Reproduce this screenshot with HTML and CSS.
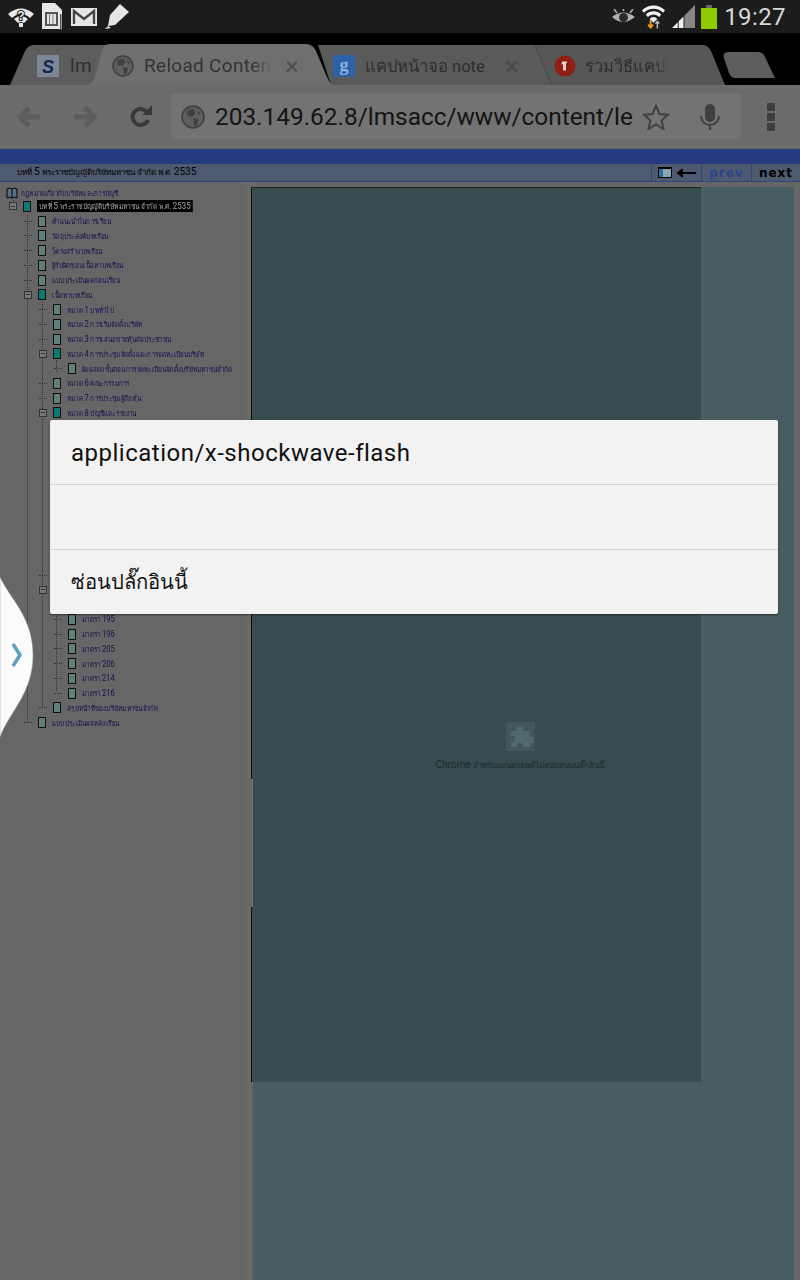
FILE: index.html
```html
<!DOCTYPE html>
<html lang="th">

<head>
    <meta charset="UTF-8">
    <meta name="viewport" content="width=device-width, initial-scale=1.0">
    <title>Reload Content</title>
    <link rel="stylesheet" href="styles.css">
</head>

<body>
    <!-- android status bar -->
    <div class="status_bar">
        <div class="status_left">
            <svg width="26" height="20" viewBox="0 0 26 20">
                <path d="M0 7 Q13 -4 26 7 L22 11 Q13 3 4 11 Z M6 12 Q13 6 20 12 L16 16 Q13 14 10 16 Z" fill="#e8e8e8" />
                <text x="13" y="13" class="wifi_q">?</text>
                <rect x="11" y="16" width="4" height="4" fill="#e8e8e8" />
            </svg>
            <svg width="21" height="27" viewBox="0 0 21 27">
                <path d="M0 0 H13 L20 7 V26 H0 Z" fill="#e6e6e6" />
                <rect x="4" y="10" width="11" height="12" fill="none" stroke="#555" stroke-width="2" />
                <path d="M7.500 10 V22 M11 10 V22" stroke="#777" />
                <rect x="18" y="11" width="1.500" height="16" fill="#555" />
            </svg>
            <svg width="26" height="18" viewBox="0 0 26 18">
                <rect width="26" height="18" fill="#e6e6e6" />
                <path d="M3 16 V3 L13 11 L23 3 V16" fill="none" stroke="#444" stroke-width="2.400" />
            </svg>
            <svg width="24" height="25" viewBox="0 0 24 25">
                <path d="M15 0 L24 8 L10 21 L3 22 L5 11 Z M3 22 L0 25 L6 24 Z" fill="#e6e6e6" />
            </svg>
        </div>
        <div class="status_right">
            <svg width="23" height="16" viewBox="0 0 23 16">
                <path d="M0 8 Q11 -1 23 8 Q11 18 0 8 Z" fill="#b0b0b0" />
                <circle cx="11.500" cy="8.500" r="4.500" fill="#2c2c2c" />
                <path d="M2 0 L5 4 M11.500 0 V2 M21 0 L18 4" stroke="#b0b0b0" stroke-width="1.500" />
            </svg>
            <svg class="wifi_icon" width="23" height="24" viewBox="0 0 24 24">
                <path d="M0 5 A17 17 0 0 1 24 5 L22 7.500 A14 14 0 0 0 2 7.500 Z M4 9.500 A11 11 0 0 1 20 9.500 L18 12 A8 8 0 0 0 6 12 Z M8 14 A5 5 0 0 1 16 14 L12 18 Z" fill="#f0f0f0" />
                <path d="M9 15 V22 M6.500 20 L9 23 L11.500 20" fill="none" stroke="#f09a20" stroke-width="2" />
                <path d="M16 24 V17 M14 19 L16 16.500 L18 19" fill="none" stroke="#bbb" stroke-width="1.500" />
            </svg>
            <svg width="23" height="23" viewBox="0 0 24 24">
                <path d="M24 0 V24 H13 V11 Z" fill="#888" />
                <path d="M0 24 L6 18 V24 Z M7 17 L12 12 V24 H7 Z" fill="#f0f0f0" />
            </svg>
            <div class="battery">
                <div class="battery_cap"></div>
                <div class="battery_body"></div>
            </div>
            <span class="clock">19:27</span>
        </div>
    </div>

    <!-- chrome tab strip -->
    <div class="tab_strip">
        <svg class="tab_shapes" width="800" height="52" viewBox="0 0 800 52">
            <path d="M10 52 L25 18 Q28 12 34 12 H110 V52 Z" fill="#5d5d5d" />
            <path d="M318 12 H420 V52 H337 Q331 52 329 46 Z" fill="#5a5a5a" />
            <path d="M420 12 H535 L552 52 H420 Z" fill="#5a5a5a" />
            <path d="M535 12 H703 Q708 12 711 18 L725 52 H552 Z" fill="#575757" />
            <path d="M535 12 L552 52" fill="none" stroke="#4c4c4c" />
            <path d="M88 52 Q93 50 95 44 L101 20 Q103 11 110 11 H306 Q313 11 316 18 L327 44 Q330 52 337 52 Z" fill="#6f6f6f" />
            <path d="M729 19 H758 Q763 19 765 24 L775 45 H735 Q731 45 729 40 L724 25 Q722 19 729 19 Z" fill="#5d5d5d" />
        </svg>
        <div class="tab tab_one">
            <svg class="favicon" width="22" height="22" viewBox="0 0 22 22">
                <rect width="22" height="22" fill="#7c8696" />
                <text x="11" y="18" class="favicon_s">S</text>
            </svg>
            <span class="tab_title">lm</span>
        </div>
        <div class="tab tab_two">
            <svg class="favicon" width="22" height="22" viewBox="0 0 22 22">
                <use href="#globe" />
            </svg>
            <span class="tab_title tab_title_active">Reload Content</span>
            <span class="tab_close">×</span>
        </div>
        <div class="tab tab_three">
            <svg class="favicon" width="22" height="22" viewBox="0 0 22 22">
                <rect width="22" height="22" rx="1" fill="#2c61a8" />
                <text x="11" y="16" class="favicon_g">g</text>
            </svg>
            <span class="tab_title tab_title_thai">แคปหน้าจอ note</span>
            <span class="tab_close tab_close_dim">×</span>
        </div>
        <div class="tab tab_four">
            <svg class="favicon" width="22" height="22" viewBox="0 0 24 24">
                <circle cx="12" cy="12" r="11.500" fill="#8e1f14" />
                <path d="M9 7 H14 V9 H13 V17 H10 V10 H8 Z" fill="#e8d8d0" />
            </svg>
            <span class="tab_title tab_title_thai tab_title_fade">รวมวิธีแคปเะ</span>
        </div>
    </div>

    <!-- chrome toolbar -->
    <div class="toolbar">
        <svg width="26" height="24" viewBox="0 0 26 24" class="nav_back">
            <path d="M24 12 H5 M13 3 L4 12 L13 21" fill="none" stroke="#5d5d5d" stroke-width="5" />
        </svg>
        <svg width="26" height="24" viewBox="0 0 26 24" class="nav_forward">
            <path d="M2 12 H21 M13 3 L22 12 L13 21" fill="none" stroke="#5d5d5d" stroke-width="5" />
        </svg>
        <svg width="24" height="24" viewBox="0 0 24 24" class="nav_reload">
            <path d="M19 15 A8 8 0 1 1 17 6" fill="none" stroke="#3a3a3a" stroke-width="4" />
            <path d="M13 10 H23 V0 Z" fill="#3a3a3a" />
        </svg>
        <div class="url_box">
            <svg width="24" height="24" viewBox="0 0 22 22">
                <use href="#globe" />
            </svg>
            <span class="url_text">203.149.62.8/lmsacc/www/content/le</span>
            <svg class="url_star" width="28" height="26" viewBox="0 0 28 26">
                <path d="M14 2 L17.500 10 L26 10.800 L19.600 16.500 L21.500 25 L14 20.500 L6.500 25 L8.400 16.500 L2 10.800 L10.500 10 Z" fill="none" stroke="#3f3f3f" stroke-width="2" />
            </svg>
            <svg class="url_mic" width="20" height="26" viewBox="0 0 20 26">
                <rect x="5" y="0" width="10" height="18" rx="5" fill="#3f3f3f" />
                <path d="M1 12 A9 9 0 0 0 19 12 M10 21 V26" fill="none" stroke="#3f3f3f" stroke-width="2" />
            </svg>
        </div>
        <div class="menu_dots"><i></i><i></i><i></i></div>
    </div>

    <!-- the lms page -->
    <div class="page_top"></div>
    <div class="page_head">
        <span class="page_title">บทที่ <b>5</b> พระราชบัญญัติบริษัทมหาชน จำกัด พ.ศ. <b>2535</b></span>
        <div class="head_tools">
            <div class="head_cell head_icons">
                <span class="pane_icon"></span>
                <svg width="19" height="10" viewBox="0 0 20 10">
                    <path d="M20 5 H5 M6 1 L1 5 L6 9" fill="#000" stroke="#000" stroke-width="2" />
                </svg>
            </div>
            <div class="head_cell head_prev">prev</div>
            <div class="head_cell head_next">next</div>
        </div>
    </div>

    <div class="page_body">
        <div class="tree" id="tree">
            <!-- dotted connectors of the tree -->
            <span class="guide guide_top"></span>
            <span class="guide guide_chapter"></span>
            <span class="guide guide_content"></span>
            <span class="guide guide_sub"></span>
            <span class="guide guide_law"></span>
        </div>
        <div class="content">
            <div class="plugin_box">
                <svg class="plugin_icon" width="29" height="29" viewBox="0 0 29 29">
                    <rect width="29" height="29" rx="1" fill="#40575b" />
                    <path d="M5 9 H11 Q9 4 14 4 Q19 4 17 9 H24 V15 Q28 13 28 18 Q28 22 24 21 V25 H17 Q18 21 14 21 Q10 21 11 25 H5 V20 Q9 21 9 17 Q9 13 5 14 Z" fill="#50696d" />
                </svg>
                <p class="plugin_text">Chrome <span class="plugin_thai">สำหรับแอนดรอยด์ไม่สนับสนุนปลั๊กอินนี้</span></p>
            </div>
        </div>
    </div>

    <!-- slide out handle on the left edge -->
    <svg class="side_handle" width="34" height="160" viewBox="0 0 34 160">
        <path d="M0 0 C10 22 33 40 33 78 C33 116 10 134 0 160 Z" fill="#fbfbfb" stroke="#9a9a9a" stroke-width="0.500" />
        <path d="M13 67 L20 78 L13 89" fill="none" stroke="#5d9fc0" stroke-width="3.500" />
    </svg>

    <!-- plugin dialog -->
    <div class="dialog">
        <div class="dialog_row">application/x-shockwave-flash</div>
        <div class="dialog_row"></div>
        <div class="dialog_row dialog_row_thai">ซ่อนปลั๊กอินนี้</div>
    </div>

    <svg class="defs_holder" width="0" height="0">
        <defs>
            <g id="globe">
                <circle cx="11" cy="11" r="10" fill="#5e5e5e" stroke="#3f3f3f" stroke-width="1.500" />
                <path d="M5 6 Q9 3 12 4 L13 8 L10 11 L6 10 Z M11 12 L16 13 L14 19 L12 19 Z M15 5 L18 8 L16 9 Z" fill="#3f3f3f" />
            </g>
        </defs>
    </svg>

    <script src="tree.js"></script>
</body>

</html>
```

FILE: tree.js
```js
// tree rows as [level, open box, filled page icon, text]
const rows = [
    [2, true, true, "บทที่ 5 พระราชบัญญัติบริษัทมหาชน จำกัด พ.ศ. 2535"],
    [3, false, false, "คำแนะนำในการเรียน"],
    [3, false, false, "วัตถุประสงค์บทเรียน"],
    [3, false, false, "โครงสร้างบทเรียน"],
    [3, false, false, "ผู้รับผิดชอบเนื้อหาบทเรียน"],
    [3, false, false, "แบบประเมินผลก่อนเรียน"],
    [3, true, true, "เนื้อหาบทเรียน"],
    [4, false, false, "หมวด 1 บททั่วไป"],
    [4, false, false, "หมวด 2 การเริ่มจัดตั้งบริษัท"],
    [4, false, false, "หมวด 3 การเสนอขายหุ้นต่อประชาชน"],
    [4, true, true, "หมวด 4 การประชุมจัดตั้งและการจดทะเบียนบริษัท"],
    [5, false, false, "ผังแสดงขั้นตอนการจดทะเบียนจัดตั้งบริษัทมหาชนจำกัด"],
    [4, false, false, "หมวด 6 คณะกรรมการ"],
    [4, false, false, "หมวด 7 การประชุมผู้ถือหุ้น"],
    [4, true, true, "หมวด 8 บัญชีและรายงาน"]
];

// rows that sit behind the dialog
for (let i = 0; i < 10; i++) {
    rows.push([5, false, false, ""]);
}
rows.push([4, false, false, ""]);
rows.push([4, true, true, ""]);
rows.push([5, false, false, ""]);

for (const num of [195, 196, 205, 206, 214, 216]) {
    rows.push([5, false, false, "มาตรา " + num]);
}
rows.push([4, false, false, "สรุปหน้าที่ของบริษัทมหาชนจำกัด"]);
rows.push([3, false, false, "แบบประเมินผลหลังเรียน"]);

// the digits on the page come out larger than the thai letters
function treeText(text) {
    return text.replace(/\d+/g, '<span class="tree_num">$&</span>');
}

const tree = document.getElementById("tree");

const root = document.createElement("div");
root.className = "tree_root";
root.innerHTML = '<svg class="book_icon" width="12" height="12" viewBox="0 0 12 12">'
    + '<path d="M1 2 Q4 0 6 2 Q8 0 11 2 V11 Q8 9 6 11 Q4 9 1 11 Z" fill="#56708a" stroke="#000" />'
    + '<path d="M6 2 V11" stroke="#000" /></svg>'
    + '<span class="tree_text">กฎหมายเกี่ยวกับบริษัทและการบัญชี</span>';
tree.appendChild(root);

rows.forEach((row, index) => {
    const el = document.createElement("div");
    el.className = "tree_row level_" + row[0];
    if (index === 0) el.classList.add("tree_row_current");

    const box = row[1] ? '<span class="open_box"></span>' : '<span class="tree_dots"></span>';
    const page = '<span class="page_icon' + (row[2] ? " page_icon_open" : "") + '"></span>';
    el.innerHTML = box + page + '<span class="tree_text">' + treeText(row[3]) + "</span>";
    tree.appendChild(el);
});
```

FILE: styles.css
```css
* {
    margin: 0;
    padding: 0;
    box-sizing: border-box;
}

html,
body {
    width: 800px;
    height: 1280px;
    overflow: hidden;
}

body {
    position: relative;
    display: flex;
    flex-direction: column;
    background-color: #666;
    font-family: Roboto, "Noto Sans", "DejaVu Sans", sans-serif;
}

/* status bar */
.status_bar {
    height: 33px;
    flex: none;
    display: flex;
    justify-content: space-between;
    align-items: center;
    padding: 0 14px 0 8px;
    background-color: #1c1c1c;
}

.status_left,
.status_right {
    display: flex;
    align-items: center;
}

.status_left {
    gap: 8px;
}

.status_right {
    gap: 7px;
}

.wifi_q {
    font: bold 12px "Liberation Sans", sans-serif;
    fill: #e8e8e8;
    stroke: #1c1c1c;
    stroke-width: 2px;
    paint-order: stroke;
    text-anchor: middle;
}

.battery {
    width: 16px;
    height: 24px;
    display: flex;
    flex-direction: column;
    align-items: center;
    margin-left: -1px;
}

.battery_cap {
    width: 6px;
    height: 3px;
    background-color: #666;
}

.battery_body {
    width: 16px;
    height: 21px;
    background-color: #8fcb00;
}

.clock {
    font-size: 24px;
    letter-spacing: 0.4px;
    color: #d8d8d8;
}

/* tab strip */
.tab_strip {
    position: relative;
    height: 52px;
    flex: none;
    display: flex;
    align-items: center;
    background-color: #000;
}

.tab_shapes {
    position: absolute;
    left: 0;
    top: 0;
}

.tab {
    position: relative;
    height: 100%;
    display: flex;
    align-items: center;
    overflow: hidden;
    padding-top: 13px;
    gap: 10px;
}

.tab_one {
    width: 75px;
    margin-left: 37px;
    gap: 11px;
}

.tab_two {
    width: 221px;
}

.tab_three {
    width: 221px;
}

.tab_four {
    width: 160px;
    gap: 9px;
}

.tab_title {
    font-size: 19px;
    letter-spacing: 0.3px;
    white-space: nowrap;
    color: #2e2e2e;
}

.tab_title_active {
    width: 128px;
    overflow: hidden;
    color: #333;
    -webkit-mask-image: linear-gradient(to right, #000 85%, transparent);
    mask-image: linear-gradient(to right, #000 85%, transparent);
}

.tab_title_thai {
    width: 122px;
    font-size: 16.5px;
    letter-spacing: 0;
}

.tab_title_fade {
    width: 85px;
    overflow: hidden;
    -webkit-mask-image: linear-gradient(to right, #000 80%, transparent);
    mask-image: linear-gradient(to right, #000 80%, transparent);
}

.tab_close {
    margin-left: 3px;
    font-size: 26px;
    line-height: 26px;
    color: #4f4f4f;
}

.tab_close_dim {
    margin-left: 8px;
    color: #484848;
}

.favicon {
    flex: none;
}

.favicon_s {
    font: bold italic 18px "Liberation Sans", sans-serif;
    fill: #10284f;
    text-anchor: middle;
}

.favicon_g {
    font: bold 18px "Liberation Serif", serif;
    fill: #8fb0dc;
    text-anchor: middle;
}

/* toolbar */
.toolbar {
    height: 63px;
    flex: none;
    display: flex;
    align-items: center;
    padding: 0 16px;
    background-color: #6b6b6b;
}

.nav_forward {
    margin-left: 30px;
}

.nav_reload {
    margin-left: 31px;
}

.url_box {
    width: 570px;
    height: 45px;
    margin-left: 18px;
    display: flex;
    align-items: center;
    padding-left: 10px;
    background-color: #737373;
    border-radius: 2px;
}

.url_text {
    width: 420px;
    margin-left: 10px;
    white-space: nowrap;
    font-size: 24.4px;
    color: #141414;
}

.url_star {
    margin-left: 7px;
}

.url_mic {
    margin-left: 30px;
}

.menu_dots {
    margin-left: 26px;
    display: flex;
    flex-direction: column;
    gap: 2px;
}

.menu_dots i {
    display: block;
    width: 8px;
    height: 8px;
    border-radius: 1px;
    background-color: #3d3d3d;
}

/* lms page */
.page_top {
    height: 15px;
    flex: none;
    margin-top: 1px;
    background-color: #263a80;
}

.page_head {
    height: 18px;
    flex: none;
    display: flex;
    justify-content: space-between;
    align-items: center;
    padding-left: 17px;
    background-color: #4e5a70;
    border-bottom: 1px solid #2f4580;
}

.page_title {
    font-size: 8px;
    color: #000;
}

.page_title b {
    font-size: 10px;
    font-weight: normal;
}

.head_tools {
    height: 100%;
    display: flex;
}

.head_cell {
    display: flex;
    align-items: center;
    justify-content: center;
    border-left: 1px solid #2f4580;
    font: bold 12px "DejaVu Sans", sans-serif;
    letter-spacing: 1px;
}

.head_icons {
    width: 50px;
    gap: 5px;
}

.pane_icon {
    width: 14px;
    height: 11px;
    border: 1px solid #000;
    border-top-width: 2px;
    background: linear-gradient(to right, #2d6f9a 35%, #86a6b4 35%);
}

.head_prev {
    width: 50px;
    color: #2b4690;
}

.head_next {
    width: 49px;
    color: #000;
}

.page_body {
    flex: 1;
    display: flex;
    min-height: 0;
}

/* contents tree */
.tree {
    position: relative;
    width: 251px;
    flex: none;
    padding-top: 4px;
    padding-left: 6px;
    background: linear-gradient(to right, #666 245px, #6a6a66 245px);
}

.guide {
    position: absolute;
    width: 0;
    border-left: 1px dotted #333;
}

.guide_top {
    left: 13px;
    top: 15px;
    height: 6px;
}

.guide_chapter {
    left: 27px;
    top: 33px;
    height: 507px;
}

.guide_content {
    left: 42px;
    top: 120px;
    height: 405px;
}

.guide_sub {
    left: 56px;
    top: 178px;
    height: 12px;
}

.guide_law {
    left: 56px;
    top: 418px;
    height: 91px;
}

.tree_root {
    height: 13px;
    display: flex;
    align-items: center;
    white-space: nowrap;
}

.tree_row {
    position: relative;
    height: 14.75px;
    display: flex;
    align-items: center;
    white-space: nowrap;
}

.tree_text {
    display: inline-block;
    font-size: 7.5px;
    color: #160e50;
    filter: blur(0.25px);
    transform: scaleX(0.84);
    transform-origin: left center;
}

.tree_num {
    font-size: 9px;
}

.book_icon {
    margin-right: 3px;
}

.level_2 {
    padding-left: 3px;
}

.level_3 {
    padding-left: 18px;
}

.level_4 {
    padding-left: 33px;
}

.level_5 {
    padding-left: 48px;
}

.tree_dots,
.open_box {
    width: 8px;
    height: 8px;
    flex: none;
    margin-right: 6px;
}

.tree_dots {
    height: 1px;
    border-top: 1px dotted #333;
}

.open_box {
    border: 1px solid #333;
    background: linear-gradient(#333, #333) center / 4px 1px no-repeat #777;
}

.page_icon {
    width: 8px;
    height: 11px;
    flex: none;
    margin-right: 6px;
    border: 1px solid #101010;
    background-color: #5f7f7a;
}

.page_icon_open {
    background-color: #0a7a72;
}

.tree_row_current .tree_text {
    padding: 0 2px;
    background-color: #000;
    color: #aaa;
    transform: scaleX(0.88);
}

/* right side */
.content {
    flex: 1;
    margin: 5px 6px 0 2px;
    background-color: #475d61;
}

.plugin_box {
    width: 450px;
    height: 895px;
    margin-left: -2px;
    display: flex;
    flex-direction: column;
    align-items: center;
    padding-top: 534px;
    padding-left: 88px;
    background:
        linear-gradient(to bottom, #0c0c0c 591px, #666 591px, #666 719px, #0c0c0c 719px) left top / 1px 100% no-repeat,
        linear-gradient(to bottom, #364c50 591px, #687477 591px, #687477 719px, #364c50 719px) 1px top / 1px 100% no-repeat,
        #364c50;
    border-top: 1px solid #222;
}

.plugin_text {
    margin-top: 8px;
    font-size: 10px;
    color: #1c2a2e;
}

.plugin_thai {
    font-size: 8px;
}

/* overlays */
.side_handle {
    position: absolute;
    left: 0;
    top: 577px;
}

.dialog {
    position: absolute;
    left: 50px;
    top: 420px;
    width: 728px;
    display: flex;
    flex-direction: column;
    background-color: #f2f2f2;
    border-radius: 2px;
    box-shadow: 0 1px 2px rgba(0, 0, 0, 0.5);
}

.dialog_row {
    height: 65px;
    display: flex;
    align-items: center;
    padding-left: 21px;
    padding-top: 2px;
    font-size: 24px;
    letter-spacing: 0.5px;
    color: #111;
    border-bottom: 1px solid #d4d4d4;
}

.dialog_row:last-child {
    height: 64px;
    border-bottom: none;
}

.dialog_row_thai {
    padding-top: 0;
    font-size: 20.2px;
    letter-spacing: 0;
}

.defs_holder {
    position: absolute;
}
```
